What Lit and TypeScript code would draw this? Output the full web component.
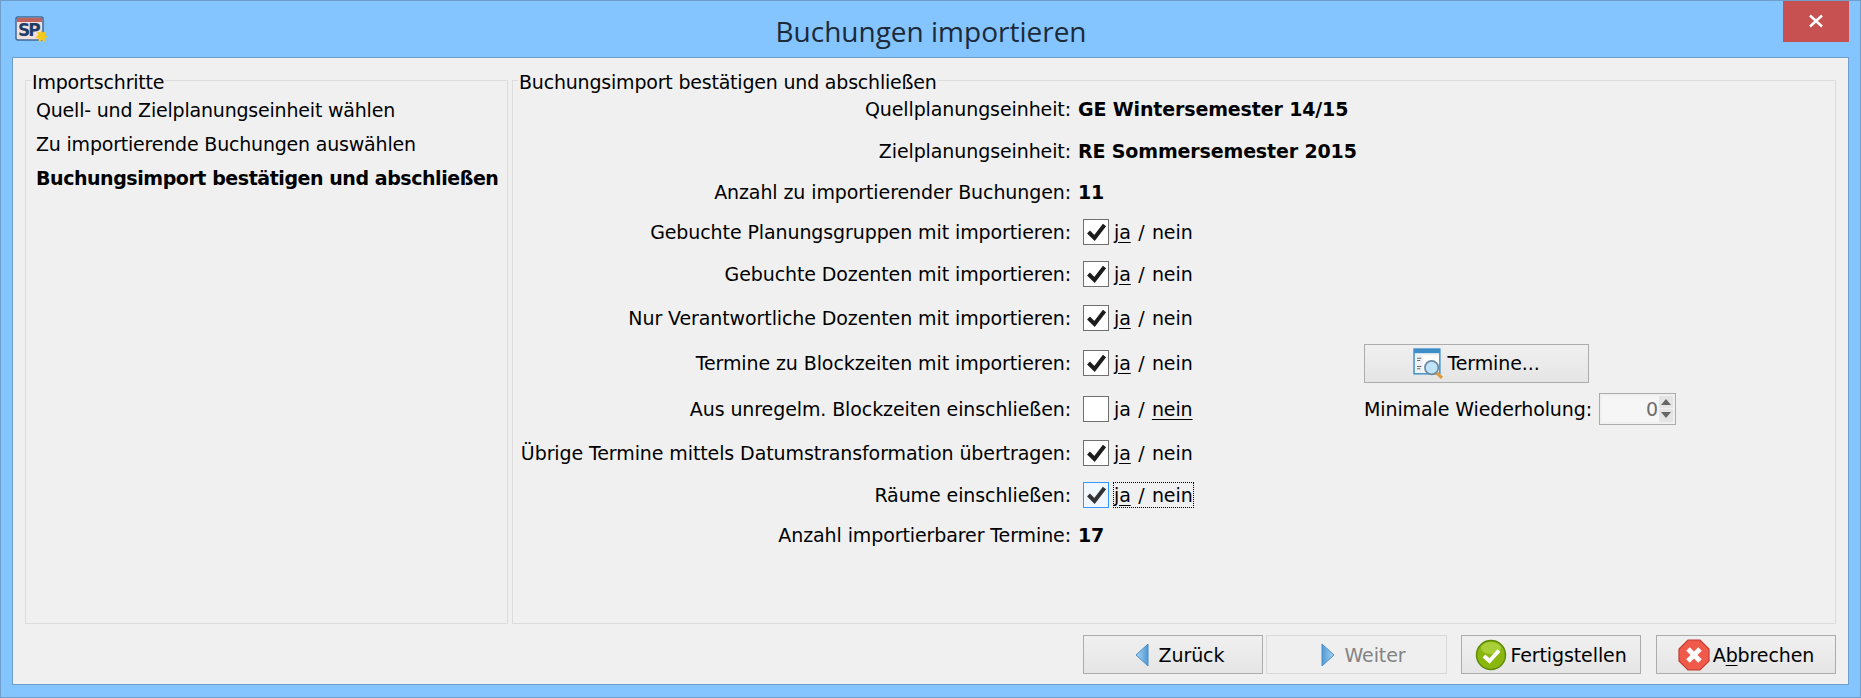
import { LitElement, html, css, svg } from "lit";
import { customElement } from "lit/decorators.js";

const check = svg`<svg class="tick" viewBox="0 0 24 24"><path d="M4.5 12 L10.5 18 L20.5 5" fill="none" stroke="currentColor" stroke-width="4"/></svg>`;

const rows: string[] = [
  "Gebuchte Planungsgruppen mit importieren:",
  "Gebuchte Dozenten mit importieren:",
  "Nur Verantwortliche Dozenten mit importieren:",
  "Termine zu Blockzeiten mit importieren:",
  "Aus unregelm. Blockzeiten einschließen:",
  "Übrige Termine mittels Datumstransformation übertragen:",
];

@customElement("app-root")
export class AppRoot extends LitElement {
  static styles = css`
    :host {
      display: flex;
      flex-direction: column;
      width: 1861px;
      height: 698px;
      box-sizing: border-box;
      background: #84c4ff;
      border: 1px solid #6f9ecb;
      font-family: "DejaVu Sans", sans-serif;
      font-size: 19px;
      letter-spacing: -0.1px;
      color: #000;
      overflow: hidden;
    }
    .titlebar {
      height: 56px;
      flex: none;
      display: flex;
      align-items: flex-start;
      padding-left: 14px;
    }
    .logo { width: 34px; height: 30px; margin-top: 15px; flex: none; }
    .title {
      flex: 1;
      text-align: center;
      font-family: "Open Sans", sans-serif;
      font-size: 28px;
      letter-spacing: 0;
      color: #1c2a38;
      line-height: 60px;
      padding-left: 30px;
    }
    .close {
      width: 66px;
      height: 41px;
      margin-right: 11px;
      background: #c75050;
      display: flex;
      align-items: center;
      justify-content: center;
      flex: none;
    }
    .close svg { width: 16px; height: 14px; margin-top: -1px; }
    .client {
      flex: 1;
      margin: 0 11px 12px 11px;
      background: #f0f0f0;
      border: 1px solid #6f9ecb;
      display: flex;
      flex-direction: column;
      padding: 22px 12px 11px 12px;
      min-height: 0;
    }
    .groups { display: flex; gap: 4px; height: 544px; flex: none; }
    .group {
      position: relative;
      border: 1px solid #dcdcdc;
      box-sizing: border-box;
    }
    .left { width: 483px; flex: none; padding: 12px 0 0 10px; }
    .right { flex: 1; }
    .legend {
      position: absolute;
      top: -11px;
      left: 5px;
      background: #f0f0f0;
      padding: 0 1px;
      line-height: 24px;
      white-space: nowrap;
      letter-spacing: -0.2px;
    }
    .steps { display: flex; flex-direction: column; letter-spacing: -0.2px; }
    .steps div { height: 34px; line-height: 34px; white-space: nowrap; }
    .steps .b { letter-spacing: -0.44px; }
    .b { font-weight: 700; }
    .form {
      display: grid;
      grid-template-columns: 558px 293px 1fr;
      grid-template-rows: 42px 42px 40px 40px 43px 45px 46px 45px 43px 41px 39px;
      margin-top: 7px;
      align-items: center;
    }
    .lab { text-align: right; white-space: nowrap; justify-self: end; }
    .val { padding-left: 12px; white-space: nowrap; display: flex; align-items: center; }
    .val.b { padding-left: 7px; letter-spacing: -0.14px; }
    .cell3 { grid-column: 3; width: 225px; }
    .cb {
      width: 26px;
      height: 26px;
      box-sizing: border-box;
      border: 1px solid #707070;
      background: #fff;
      color: #1c1c1c;
      margin-right: 4px;
      flex: none;
    }
    .cb.focus { border-color: #3399ff; background: #f0f7ff; color: #333; }
    .tick { display: block; width: 24px; height: 24px; }
    u { text-underline-offset: 3px; }
    .choice { padding: 0; line-height: 24px; border: 1px dotted transparent; word-spacing: 1.5px; }
    .choice.focus { border-color: #000; }
    .btn {
      box-sizing: border-box;
      border: 1px solid #acacac;
      background: linear-gradient(#f0f0f0, #e5e5e5);
      height: 39px;
      display: flex;
      align-items: center;
      justify-content: center;
      gap: 3px;
    }
    .btn svg { flex: none; }
    .termine { width: 225px; }
    .min { display: flex; align-items: center; justify-content: space-between; width: 312px; white-space: nowrap; }
    .spin {
      width: 77px;
      height: 32px;
      box-sizing: border-box;
      border: 1px solid #acacac;
      background: #f0f0f0;
      padding: 2px;
      display: flex;
      flex: none;
    }
    .spin .num {
      flex: 1;
      background: #f6f6f6;
      color: #6d6d6d;
      text-align: right;
      line-height: 26px;
      padding-right: 1px;
    }
    .spin .arrows { width: 14px; display: flex; flex-direction: column; gap: 1px; flex: none; }
    .spin .arrows span {
      flex: 1;
      background: #e4e4e4;
      display: flex;
      align-items: center;
      justify-content: center;
    }
    .actions { display: flex; margin-top: 11px; justify-content: flex-end; }
    .actions .btn { width: 180px; }
    .actions .nav { padding-left: 12px; }
    .actions .weiter { width: 181px; margin-left: 3px; }
    .actions .fertig { margin-left: 14px; }
    .actions .abbr { margin-left: 15px; }
    .btn.off { background: #efefef; border-color: #d9d9d9; color: #838383; }
    .arrowlabel { margin-left: 6px; }
  `;

  private choice(on: boolean, focus = false) {
    return html`<span class="cb ${focus ? "focus" : ""}">${on ? check : ""}</span><span class="choice ${focus ? "focus" : ""}">${on ? html`<u>ja</u> / nein` : html`ja / <u>nein</u>`}</span>`;
  }

  render() {
    return html`
      <div class="titlebar">
        <svg class="logo" viewBox="0 0 34 30">
          <rect x="1" y="1" width="27" height="23" rx="2" fill="#f1dfdf" stroke="#3f6a96" stroke-width="1.5"/>
          <rect x="2" y="2" width="25" height="4" fill="#c0625e"/>
          <text x="3" y="20" font-family="DejaVu Sans" font-weight="700" font-size="17" letter-spacing="-2" fill="#1d3d66">SP</text>
          <path d="M26 13l1.6 3.4 3.6-1-1.2 3.6 3.2 2-3.5 1.2.3 3.8-3.2-2-3 2.4-.2-3.8-3.4-1.2 3-2.2-1-3.6 3.4 1z" fill="#f6c91f"/>
        </svg>
        <div class="title">Buchungen importieren</div>
        <div class="close">
          <svg viewBox="0 0 16 14"><path d="M2 1.5 L14 12.5 M14 1.5 L2 12.5" stroke="#fff" stroke-width="2.4" fill="none"/></svg>
        </div>
      </div>
      <div class="client">
        <div class="groups">
          <div class="group left">
            <div class="legend">Importschritte</div>
            <div class="steps">
              <div>Quell- und Zielplanungseinheit wählen</div>
              <div>Zu importierende Buchungen auswählen</div>
              <div class="b">Buchungsimport bestätigen und abschließen</div>
            </div>
          </div>
          <div class="group right">
            <div class="legend">Buchungsimport bestätigen und abschließen</div>
            <div class="form">
              <div class="lab">Quellplanungseinheit:</div><div class="val b">GE Wintersemester 14/15</div><div></div>
              <div class="lab">Zielplanungseinheit:</div><div class="val b">RE Sommersemester 2015</div><div></div>
              <div class="lab">Anzahl zu importierender Buchungen:</div><div class="val b">11</div><div></div>
              <div class="lab">${rows[0]}</div><div class="val">${this.choice(true)}</div><div></div>
              <div class="lab">${rows[1]}</div><div class="val">${this.choice(true)}</div><div></div>
              <div class="lab">${rows[2]}</div><div class="val">${this.choice(true)}</div><div></div>
              <div class="lab">${rows[3]}</div><div class="val">${this.choice(true)}</div>
              <div class="cell3">
                <div class="btn termine">
                  <svg width="31" height="31" viewBox="0 0 30 30">
                    <rect x="1" y="1" width="25" height="24" fill="#eef2f6" stroke="#3d8fc9" stroke-width="1.4"/>
                    <rect x="1" y="1" width="25" height="4" fill="#3d8fc9"/>
                    <rect x="10" y="7" width="15" height="16" fill="#fff"/>
                    <path d="M4 10h4M4 12h3M4 18h4M4 20h3" stroke="#666" stroke-width="1"/>
                    <circle cx="18" cy="19" r="6.5" fill="#bfe4f7" stroke="#6b8aa0" stroke-width="1.6"/>
                    <path d="M23 24l5 5" stroke="#e09a3c" stroke-width="3"/>
                  </svg>
                  <span>Termine...</span>
                </div>
              </div>
              <div class="lab">${rows[4]}</div><div class="val">${this.choice(false)}</div>
              <div class="cell3">
                <div class="min">
                  <span>Minimale Wiederholung:</span>
                  <div class="spin">
                    <div class="num">0</div>
                    <div class="arrows">
                      <span><svg width="10" height="6" viewBox="0 0 10 6"><path d="M5 0L10 6H0z" fill="#666"/></svg></span>
                      <span><svg width="10" height="6" viewBox="0 0 10 6"><path d="M5 6L10 0H0z" fill="#666"/></svg></span>
                    </div>
                  </div>
                </div>
              </div>
              <div class="lab">${rows[5]}</div><div class="val">${this.choice(true)}</div><div></div>
              <div class="lab">Räume einschließen:</div><div class="val">${this.choice(true, true)}</div><div></div>
              <div class="lab">Anzahl importierbarer Termine:</div><div class="val b">17</div><div></div>
            </div>
          </div>
        </div>
        <div class="actions">
          <div class="btn nav">
            <svg width="16" height="26" viewBox="0 0 16 26">
              <defs><linearGradient id="ga" x1="0" y1="0" x2="1" y2="0"><stop offset="0" stop-color="#a9d4f2"/><stop offset="1" stop-color="#4f9ad6"/></linearGradient></defs>
              <path d="M14 2L2 13l12 11z" fill="url(#ga)" stroke="#4a8cc4" stroke-linejoin="round"/>
            </svg>
            <span class="arrowlabel">Zurück</span>
          </div>
          <div class="btn off nav weiter">
            <svg width="16" height="26" viewBox="0 0 16 26">
              <defs><linearGradient id="gb" x1="0" y1="0" x2="1" y2="0"><stop offset="0" stop-color="#4f9ad6"/><stop offset="1" stop-color="#a9d4f2"/></linearGradient></defs>
              <path d="M2 2l12 11L2 24z" fill="url(#gb)" stroke="#4a8cc4" stroke-linejoin="round"/>
            </svg>
            <span class="arrowlabel">Weiter</span>
          </div>
          <div class="btn fertig">
            <svg width="32" height="32" viewBox="0 0 32 32">
              <circle cx="16" cy="16" r="14.5" fill="#8ab70e" stroke="#5d8a06" stroke-width="1.4"/>
              <ellipse cx="16" cy="9" rx="10" ry="6" fill="#b6d94a" opacity=".7"/>
              <path d="M9 17l5.5 5L24 11.5" fill="none" stroke="#fff" stroke-width="4"/>
            </svg>
            <span>Fertigstellen</span>
          </div>
          <div class="btn abbr">
            <svg width="32" height="32" viewBox="0 0 32 32">
              <path d="M10 1h12l9 9v12l-9 9H10l-9-9V10z" fill="#f05a4a" stroke="#c23d30" stroke-width="1.2"/>
              <path d="M10 10l12 12M22 10L10 22" stroke="#fff" stroke-width="5"/>
            </svg>
            <span>A<u>b</u>brechen</span>
          </div>
        </div>
      </div>
    `;
  }
}
